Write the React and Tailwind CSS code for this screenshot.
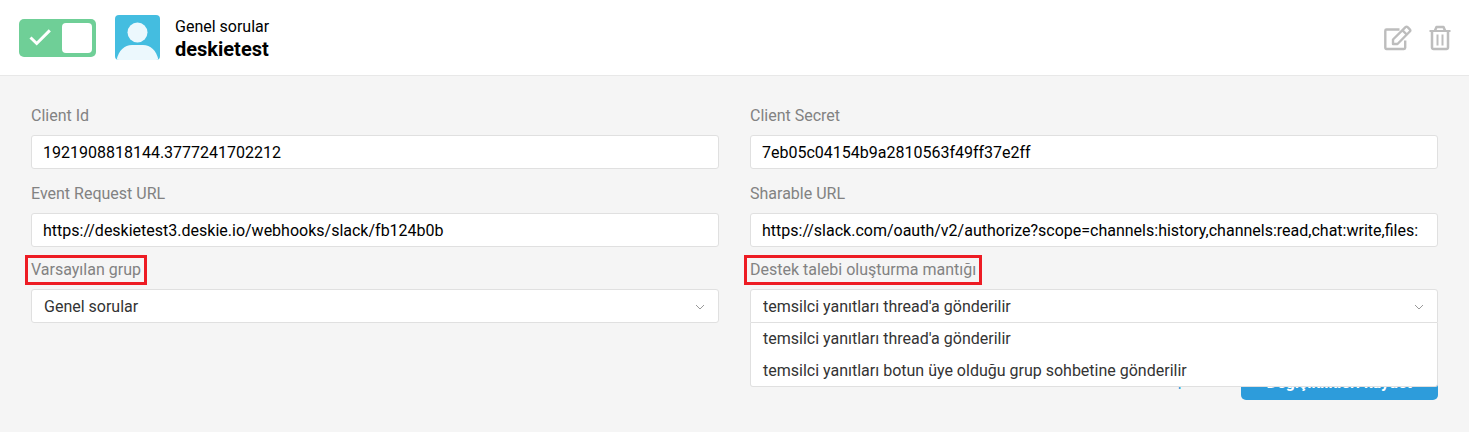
import React, { useState } from "react";

const GROUPS = ["Genel sorular"];

const LOGIC_OPTIONS = [
  "temsilci yanıtları thread'a gönderilir",
  "temsilci yanıtları botun üye olduğu grup sohbetine gönderilir",
];

const SHARABLE_URL = "https://slack.com/oauth/v2/authorize?scope=channels:history,channels:read,chat:write,files:";

function CheckIcon() {
  return (
    <svg className="absolute left-[10px] top-[9px] w-6 h-5" viewBox="0 0 24 20" fill="none" stroke="#fff" strokeWidth="3">
      <path d="M1.5 9.5 7.7 15.5 20.8 2.4" />
    </svg>
  );
}

function Avatar() {
  return (
    <svg className="w-[45px] h-[45px] rounded" viewBox="0 0 45 45">
      <rect width="45" height="45" fill="#44bde0" />
      <circle cx="22.5" cy="17.5" r="10" fill="#ecf8fd" />
      <path d="M1.5 45C3.5 35.5 9.5 30 17 30h11c7.5 0 13.5 5.5 15.5 15z" fill="#ecf8fd" />
    </svg>
  );
}

function EditIcon() {
  return (
    <svg className="w-7 h-7" viewBox="0 0 28 28" fill="none" stroke="#bdbdbd" strokeWidth="2.4" strokeLinejoin="round">
      <path d="M15.5 5.5H2.5a1.2 1.2 0 0 0-1.2 1.2v17A1.2 1.2 0 0 0 2.5 25h17.5a1.2 1.2 0 0 0 1.2-1.2V16.5" />
      <path d="M9 20v-4.500L21.5 3.200a1.5 1.5 0 0 1 2.100 0l2.200 2.200a1.5 1.5 0 0 1 0 2.100L13.500 20z" />
      <path d="m18.5 6.300 4.200 4.200" />
    </svg>
  );
}

function TrashIcon() {
  return (
    <svg className="w-6 h-7" viewBox="0 0 24 28" fill="none" stroke="#bdbdbd" strokeWidth="2">
      <path d="M1.5 7h21" />
      <path d="M7 6.5 8.5 3h7L17 6.5" strokeWidth="2.5" strokeLinejoin="round" />
      <path d="M4 7v16.5A1.5 1.5 0 0 0 5.5 25h13a1.5 1.5 0 0 0 1.5-1.5V7" strokeWidth="2.5" />
      <path d="M9.5 10.5v11M14.5 10.5v11" />
    </svg>
  );
}

function Chevron() {
  return (
    <svg className="absolute right-[14px] top-[14px] w-[10px] h-2 pointer-events-none" viewBox="0 0 10 8" fill="none" stroke="#999">
      <path d="M1 2 5 6 9 2" />
    </svg>
  );
}

function Label({ id, marked, children }) {
  return (
    <label htmlFor={id} className="relative block w-fit h-6 mb-[7px] leading-6 text-[#828282]">
      {children}
      {marked && <span className="absolute -inset-x-[6px] -inset-y-[3px] border-3 border-[#ed1c24]" />}
    </label>
  );
}

function TextField({ id, label, value }) {
  return (
    <div>
      <Label id={id}>{label}</Label>
      <input
        id={id}
        type="text"
        readOnly
        value={value}
        className="block w-full h-[34px] px-[11px] bg-white border border-[#e0e0e0] rounded-[3px] text-black outline-none"
      />
    </div>
  );
}

function SelectField({ id, label, options, open }) {
  const [value, setValue] = useState(options[0]);

  return (
    <div>
      <Label id={id} marked>{label}</Label>
      <div className="relative">
        <select
          id={id}
          value={value}
          onChange={(e) => setValue(e.target.value)}
          className={`block w-full h-[34px] pt-px pl-3 pr-8 appearance-none bg-white border border-[#e0e0e0] text-[#333] outline-none ${open ? "rounded-t-[3px]" : "rounded-[3px]"}`}
        >
          {options.map((o) => (
            <option key={o}>{o}</option>
          ))}
        </select>
        <Chevron />
        {open && (
          <ul className="absolute z-10 top-full inset-x-0 bg-white border border-t-0 border-[#e0e0e0] rounded-b-[3px]">
            {options.map((o) => (
              <li key={o} onClick={() => setValue(o)} className="h-8 last:h-[31px] px-3 leading-8 text-[#333] cursor-pointer">
                {o}
              </li>
            ))}
          </ul>
        )}
      </div>
    </div>
  );
}

function App() {
  const [enabled, setEnabled] = useState(true);

  return (
    <div className="min-h-screen bg-[#f5f5f5] font-[Roboto,sans-serif] text-base">
      <header className="flex items-center h-[76px] pl-[19px] pr-[17px] bg-white border-b border-[#e8e8e8]">
        <label className="relative block w-[77px] h-[38px] rounded-[5px] bg-[#6fcf97] cursor-pointer">
          <input
            type="checkbox"
            aria-label="deskietest"
            checked={enabled}
            onChange={(e) => setEnabled(e.target.checked)}
            className="absolute inset-0 w-full h-full opacity-0"
          />
          <CheckIcon />
          <span className="absolute right-1 top-1 w-[30px] h-[30px] rounded bg-white" />
        </label>
        <div className="ml-[19px]">
          <Avatar />
        </div>
        <div className="ml-[15px] pt-[2px] text-black">
          <div className="leading-5">Genel sorular</div>
          <div className="text-xl leading-6 font-bold">deskietest</div>
        </div>
        <div className="flex items-center gap-4 ml-auto">
          <button type="button" aria-label="edit"><EditIcon /></button>
          <button type="button" aria-label="delete"><TrashIcon /></button>
        </div>
      </header>

      <form className="px-[31px] pt-7 pb-8" onSubmit={(e) => e.preventDefault()}>
        <div className="grid grid-cols-2 gap-x-[31px] gap-y-[13px]">
          <TextField id="client-id" label="Client Id" value="1921908818144.3777241702212" />
          <TextField id="client-secret" label="Client Secret" value="7eb05c04154b9a2810563f49ff37e2ff" />
          <TextField id="event-url" label="Event Request URL" value="https://deskietest3.deskie.io/webhooks/slack/fb124b0b" />
          <TextField id="sharable-url" label="Sharable URL" value={SHARABLE_URL} />
        </div>
        <div className="grid grid-cols-2 gap-x-[31px] mt-[11px]">
          <SelectField id="group" label="Varsayılan grup" options={GROUPS} />
          <SelectField id="logic" label="Destek talebi oluşturma mantığı" options={LOGIC_OPTIONS} open />
        </div>
        <div className="flex items-start justify-end gap-9 mt-[43px]">
          <a href="#" className="leading-[30px] text-[#2d9cdb]">İptal</a>
          <button type="submit" className="h-[34px] px-[26px] rounded-[5px] bg-[#2d9cdb] text-white font-bold">
            Değişiklikleri kaydet
          </button>
        </div>
      </form>
    </div>
  );
}

export default App;
